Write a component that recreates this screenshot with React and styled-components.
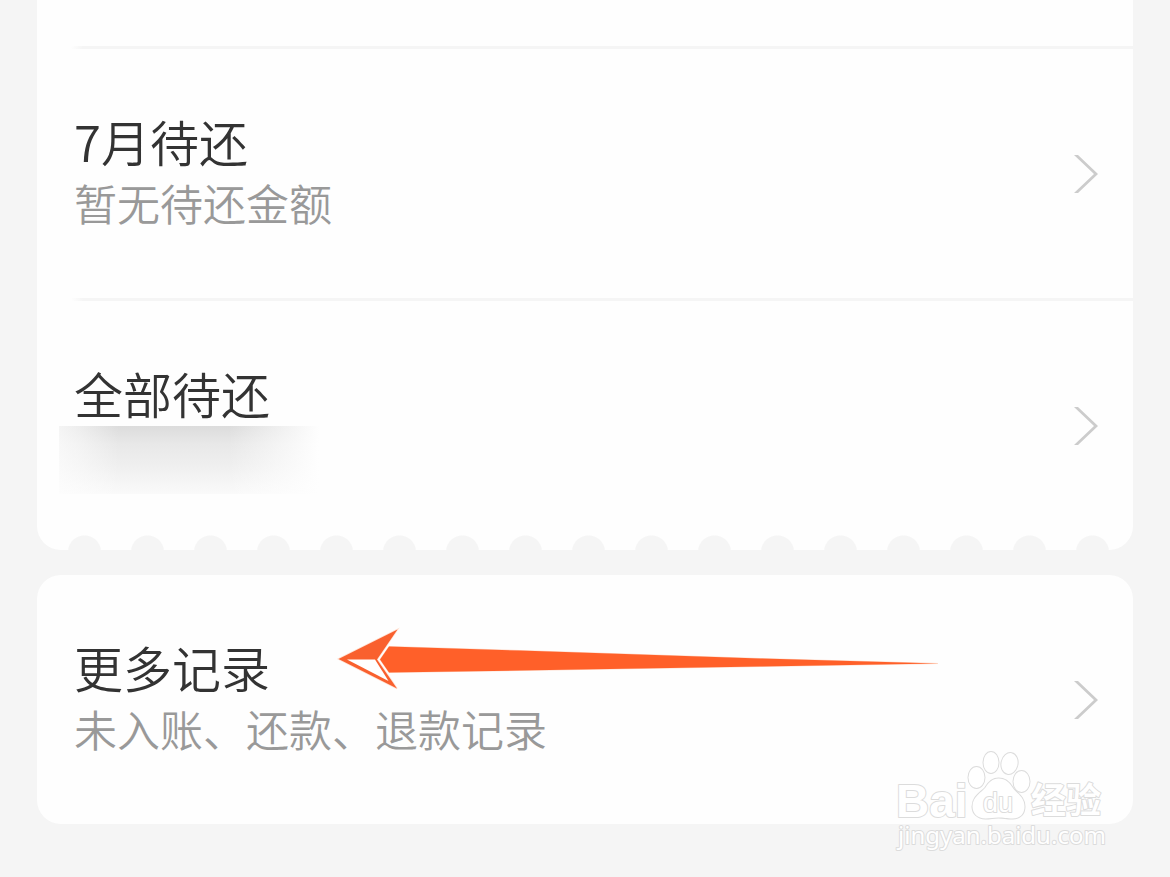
import React from "react";
import styled, { createGlobalStyle } from "styled-components";

const GlobalStyle = createGlobalStyle`
  body {
    margin: 0;
    background: #f5f5f5;
    font-family: "Noto Sans CJK SC", "Noto Sans", sans-serif;
  }
`;

const Page = styled.main`
  box-sizing: border-box;
  min-height: 100vh;
  padding: 0 37px 53px;
  display: flex;
  flex-direction: column;
  gap: 25px;
  background: #f5f5f5;
`;

const Card = styled.section`
  position: relative;
  background: #fefefe;
  border-radius: ${(p) => (p.$continued ? "0 0 24px 24px" : "24px")};
`;

const PreviousRow = styled.div`
  height: 46px;
`;

const Divider = styled.hr`
  height: 3px;
  margin: 0 0 0 34px;
  border: 0;
  background: linear-gradient(to right, #fefefe, #f5f5f5 12px);
`;

const Row = styled.a`
  display: flex;
  align-items: center;
  justify-content: space-between;
  padding: 62px 35px 61px 37px;
  color: inherit;
  text-decoration: none;
`;

const RowText = styled.div`
  display: flex;
  flex-direction: column;
  padding-bottom: 4px;
`;

const Title = styled.span`
  font-size: 49px;
  line-height: 60px;
  font-weight: 350;
  color: #333;
`;

const Subtitle = styled.span`
  font-size: 43px;
  line-height: 62px;
  font-weight: 350;
  color: #999;
`;

const HiddenAmount = styled.span`
  width: 264px;
  height: 68px;
  margin: 3px 0 -9px -15px;
  background:
    linear-gradient(to right, rgba(254, 254, 254, 0.7), rgba(254, 254, 254, 0.5) 20px, transparent 60px, transparent 170px, #fefefe 260px),
    linear-gradient(to bottom, #dcdcdc, #e8e8e8 18px, #efefef 40px, #fafafa);
`;

const Perforation = styled.div`
  position: absolute;
  left: 16px;
  right: 9px;
  bottom: 0;
  height: 15px;
  background: radial-gradient(circle at 50% 17px, #f5f5f5 16px, transparent 17px) 0 0 / 63px 15px round;
`;

const ChevronIcon = styled.svg`
  flex: none;
  width: 24px;
  height: 40px;
`;

const ArrowDrawing = styled.svg`
  position: absolute;
  left: 299px;
  top: 51px;
  width: 604px;
  height: 66px;
  pointer-events: none;
`;

const Watermark = styled.svg`
  position: absolute;
  right: 22px;
  bottom: -32px;
  width: 220px;
  height: 110px;
  pointer-events: none;
`;

function Chevron() {
  return (
    <ChevronIcon viewBox="0 0 24 40" aria-hidden="true">
      <path d="M0 1h4L24 20 4 39H0L20 20Z" fill="#ccc" />
    </ChevronIcon>
  );
}

function RecordRow({ title, subtitle }) {
  return (
    <Row href="#">
      <RowText>
        <Title>{title}</Title>
        {subtitle ? <Subtitle>{subtitle}</Subtitle> : <HiddenAmount />}
      </RowText>
      <Chevron />
    </Row>
  );
}

function Arrow() {
  return (
    <ArrowDrawing viewBox="336 626 604 66" aria-hidden="true">
      <path
        d="M389 646.5 520 650.5 760 658.5 938 663.5 760 666.5 520 670.5 389 672.5 380 659.5Z"
        fill="#ff6029"
        stroke="#ffd9c8"
        strokeWidth="1"
        paintOrder="stroke"
      />
      <path d="M338.5 659 397.5 629.5 377 659.5 397 688.5Z" fill="#f9602e" stroke="#ffe3d5" strokeWidth="1.5" paintOrder="stroke" />
      <path d="M347 659.5H375L388.5 681Z" fill="#fff" />
    </ArrowDrawing>
  );
}

function BaiduMark() {
  return (
    <Watermark viewBox="891 746 220 110" role="img" aria-label="Baidu 经验">
      <g fill="#fff" stroke="#dcdcdc" strokeWidth="2" paintOrder="stroke" strokeLinejoin="round">
        <text x="896" y="817" fontFamily="Liberation Sans" fontWeight="700" fontSize="46">Bai</text>
        <ellipse cx="976.5" cy="777.5" rx="8" ry="10.5" />
        <ellipse cx="991" cy="762.5" rx="7.5" ry="10.5" />
        <ellipse cx="1009.5" cy="763.5" rx="8" ry="10.5" transform="rotate(12 1009.5 763.5)" />
        <ellipse cx="1021.5" cy="781.5" rx="8" ry="10.5" />
        <path d="M998.5 778.5c7 0 11 4 14 9 3 5 12 9 12 19 0 7-4 12-12 12-6 0-9-1-14-1s-8 1-13 1c-8 0-13-5-13-12 0-10 9-14 13-19 3-5 7-9 13-9Z" />
        <text x="983" y="812" fontFamily="Liberation Sans" fontSize="27">du</text>
        <text x="1031" y="813" fontFamily="Noto Sans CJK SC" fontWeight="700" fontSize="35">经验</text>
        <text x="898" y="844" fontFamily="Noto Sans" fontSize="24">jingyan.baidu.com</text>
      </g>
    </Watermark>
  );
}

export default function App() {
  return (
    <>
      <GlobalStyle />
      <Page>
        <Card $continued>
          <PreviousRow />
          <Divider />
          <RecordRow title="7月待还" subtitle="暂无待还金额" />
          <Divider />
          <RecordRow title="全部待还" />
          <Perforation />
        </Card>
        <Card>
          <RecordRow title="更多记录" subtitle="未入账、还款、退款记录" />
          <Arrow />
          <BaiduMark />
        </Card>
      </Page>
    </>
  );
}
